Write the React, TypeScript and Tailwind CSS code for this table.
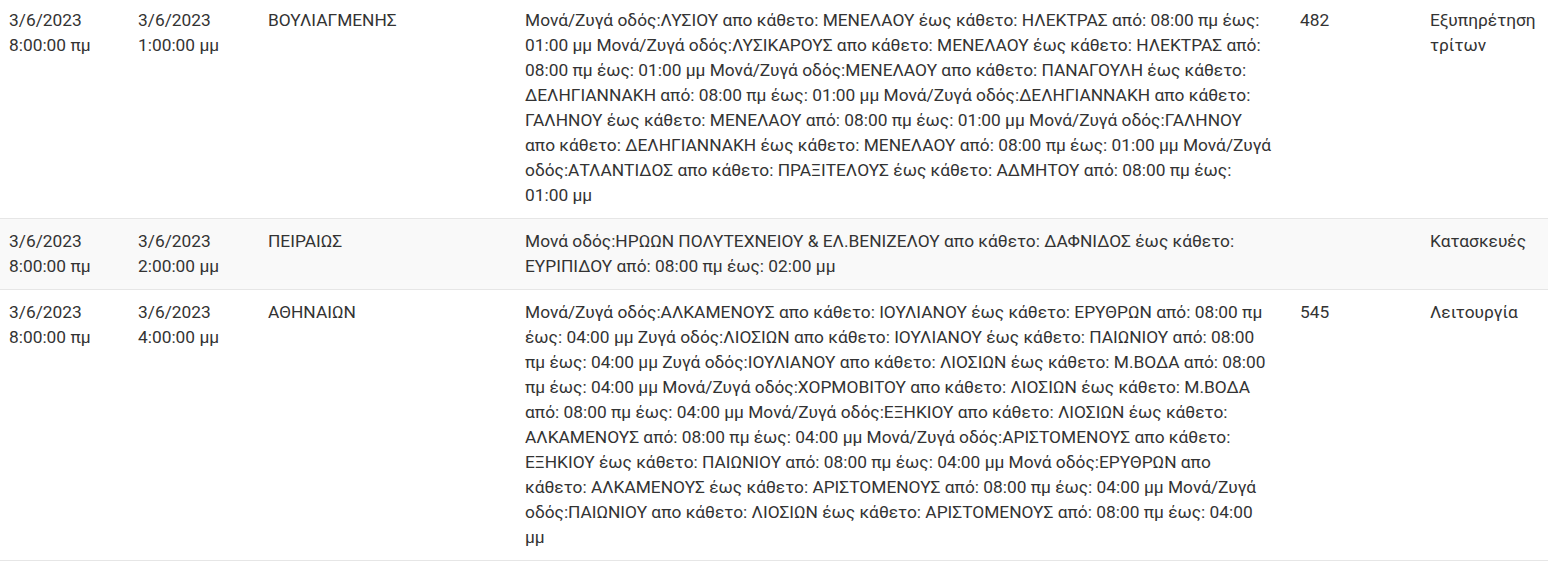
type Row = {
  start: [string, string];
  end: [string, string];
  area: string;
  streets: string;
  count: string;
  reason: string;
};

const rows: Row[] = [
  {
    start: ["3/6/2023", "8:00:00 πμ"],
    end: ["3/6/2023", "1:00:00 μμ"],
    area: "ΒΟΥΛΙΑΓΜΕΝΗΣ",
    streets:
      "Μονά/Ζυγά οδός:ΛΥΣΙΟΥ απο κάθετο: ΜΕΝΕΛΑΟΥ έως κάθετο: ΗΛΕΚΤΡΑΣ από: 08:00 πμ έως: 01:00 μμ Μονά/Ζυγά οδός:ΛΥΣΙΚΑΡΟΥΣ απο κάθετο: ΜΕΝΕΛΑΟΥ έως κάθετο: ΗΛΕΚΤΡΑΣ από: 08:00 πμ έως: 01:00 μμ Μονά/Ζυγά οδός:ΜΕΝΕΛΑΟΥ απο κάθετο: ΠΑΝΑΓΟΥΛΗ έως κάθετο: ΔΕΛΗΓΙΑΝΝΑΚΗ από: 08:00 πμ έως: 01:00 μμ Μονά/Ζυγά οδός:ΔΕΛΗΓΙΑΝΝΑΚΗ απο κάθετο: ΓΑΛΗΝΟΥ έως κάθετο: ΜΕΝΕΛΑΟΥ από: 08:00 πμ έως: 01:00 μμ Μονά/Ζυγά οδός:ΓΑΛΗΝΟΥ απο κάθετο: ΔΕΛΗΓΙΑΝΝΑΚΗ έως κάθετο: ΜΕΝΕΛΑΟΥ από: 08:00 πμ έως: 01:00 μμ Μονά/Ζυγά οδός:ΑΤΛΑΝΤΙΔΟΣ απο κάθετο: ΠΡΑΞΙΤΕΛΟΥΣ έως κάθετο: ΑΔΜΗΤΟΥ από: 08:00 πμ έως: 01:00 μμ",
    count: "482",
    reason: "Εξυπηρέτηση τρίτων",
  },
  {
    start: ["3/6/2023", "8:00:00 πμ"],
    end: ["3/6/2023", "2:00:00 μμ"],
    area: "ΠΕΙΡΑΙΩΣ",
    streets:
      "Μονά οδός:ΗΡΩΩΝ ΠΟΛΥΤΕΧΝΕΙΟΥ & ΕΛ.ΒΕΝΙΖΕΛΟΥ απο κάθετο: ΔΑΦΝΙΔΟΣ έως κάθετο: ΕΥΡΙΠΙΔΟΥ από: 08:00 πμ έως: 02:00 μμ",
    count: "",
    reason: "Κατασκευές",
  },
  {
    start: ["3/6/2023", "8:00:00 πμ"],
    end: ["3/6/2023", "4:00:00 μμ"],
    area: "ΑΘΗΝΑΙΩΝ",
    streets:
      "Μονά/Ζυγά οδός:ΑΛΚΑΜΕΝΟΥΣ απο κάθετο: ΙΟΥΛΙΑΝΟΥ έως κάθετο: ΕΡΥΘΡΩΝ από: 08:00 πμ έως: 04:00 μμ Ζυγά οδός:ΛΙΟΣΙΩΝ απο κάθετο: ΙΟΥΛΙΑΝΟΥ έως κάθετο: ΠΑΙΩΝΙΟΥ από: 08:00 πμ έως: 04:00 μμ Ζυγά οδός:ΙΟΥΛΙΑΝΟΥ απο κάθετο: ΛΙΟΣΙΩΝ έως κάθετο: Μ.ΒΟΔΑ από: 08:00 πμ έως: 04:00 μμ Μονά/Ζυγά οδός:ΧΟΡΜΟΒΙΤΟΥ απο κάθετο: ΛΙΟΣΙΩΝ έως κάθετο: Μ.ΒΟΔΑ από: 08:00 πμ έως: 04:00 μμ Μονά/Ζυγά οδός:ΕΞΗΚΙΟΥ απο κάθετο: ΛΙΟΣΙΩΝ έως κάθετο: ΑΛΚΑΜΕΝΟΥΣ από: 08:00 πμ έως: 04:00 μμ Μονά/Ζυγά οδός:ΑΡΙΣΤΟΜΕΝΟΥΣ απο κάθετο: ΕΞΗΚΙΟΥ έως κάθετο: ΠΑΙΩΝΙΟΥ από: 08:00 πμ έως: 04:00 μμ Μονά οδός:ΕΡΥΘΡΩΝ απο κάθετο: ΑΛΚΑΜΕΝΟΥΣ έως κάθετο: ΑΡΙΣΤΟΜΕΝΟΥΣ από: 08:00 πμ έως: 04:00 μμ Μονά/Ζυγά οδός:ΠΑΙΩΝΙΟΥ απο κάθετο: ΛΙΟΣΙΩΝ έως κάθετο: ΑΡΙΣΤΟΜΕΝΟΥΣ από: 08:00 πμ έως: 04:00 μμ",
    count: "545",
    reason: "Λειτουργία",
  },
];

// Cell with the shared padding of the listing.
function Cell({ children }: { children: React.ReactNode }) {
  return <td className="pl-[9px] pr-[15px] py-[10px] align-top">{children}</td>;
}

export default function App() {
  return (
    <div className="-mt-[2px] min-h-screen bg-white font-['Roboto',sans-serif] text-[17.33px] leading-[25px] text-[#333]">
      <table className="w-full table-fixed border-collapse">
        <colgroup>
          <col className="w-[129px]" />
          <col className="w-[130px]" />
          <col className="w-[257px]" />
          <col className="w-[775px]" />
          <col className="w-[130px]" />
          <col />
        </colgroup>
        <tbody>
          {rows.map((row, i) => (
            <tr
              key={row.area}
              className={
                i % 2 === 1
                  ? "border-b border-[#e6e6e6] bg-[#f9f9f9]"
                  : "border-b border-[#e6e6e6] bg-white"
              }
            >
              <Cell>
                {row.start[0]}
                <br />
                {row.start[1]}
              </Cell>
              <Cell>
                {row.end[0]}
                <br />
                {row.end[1]}
              </Cell>
              <Cell>{row.area}</Cell>
              <Cell>{row.streets}</Cell>
              <Cell>{row.count}</Cell>
              <Cell>{row.reason}</Cell>
            </tr>
          ))}
        </tbody>
      </table>
    </div>
  );
}
